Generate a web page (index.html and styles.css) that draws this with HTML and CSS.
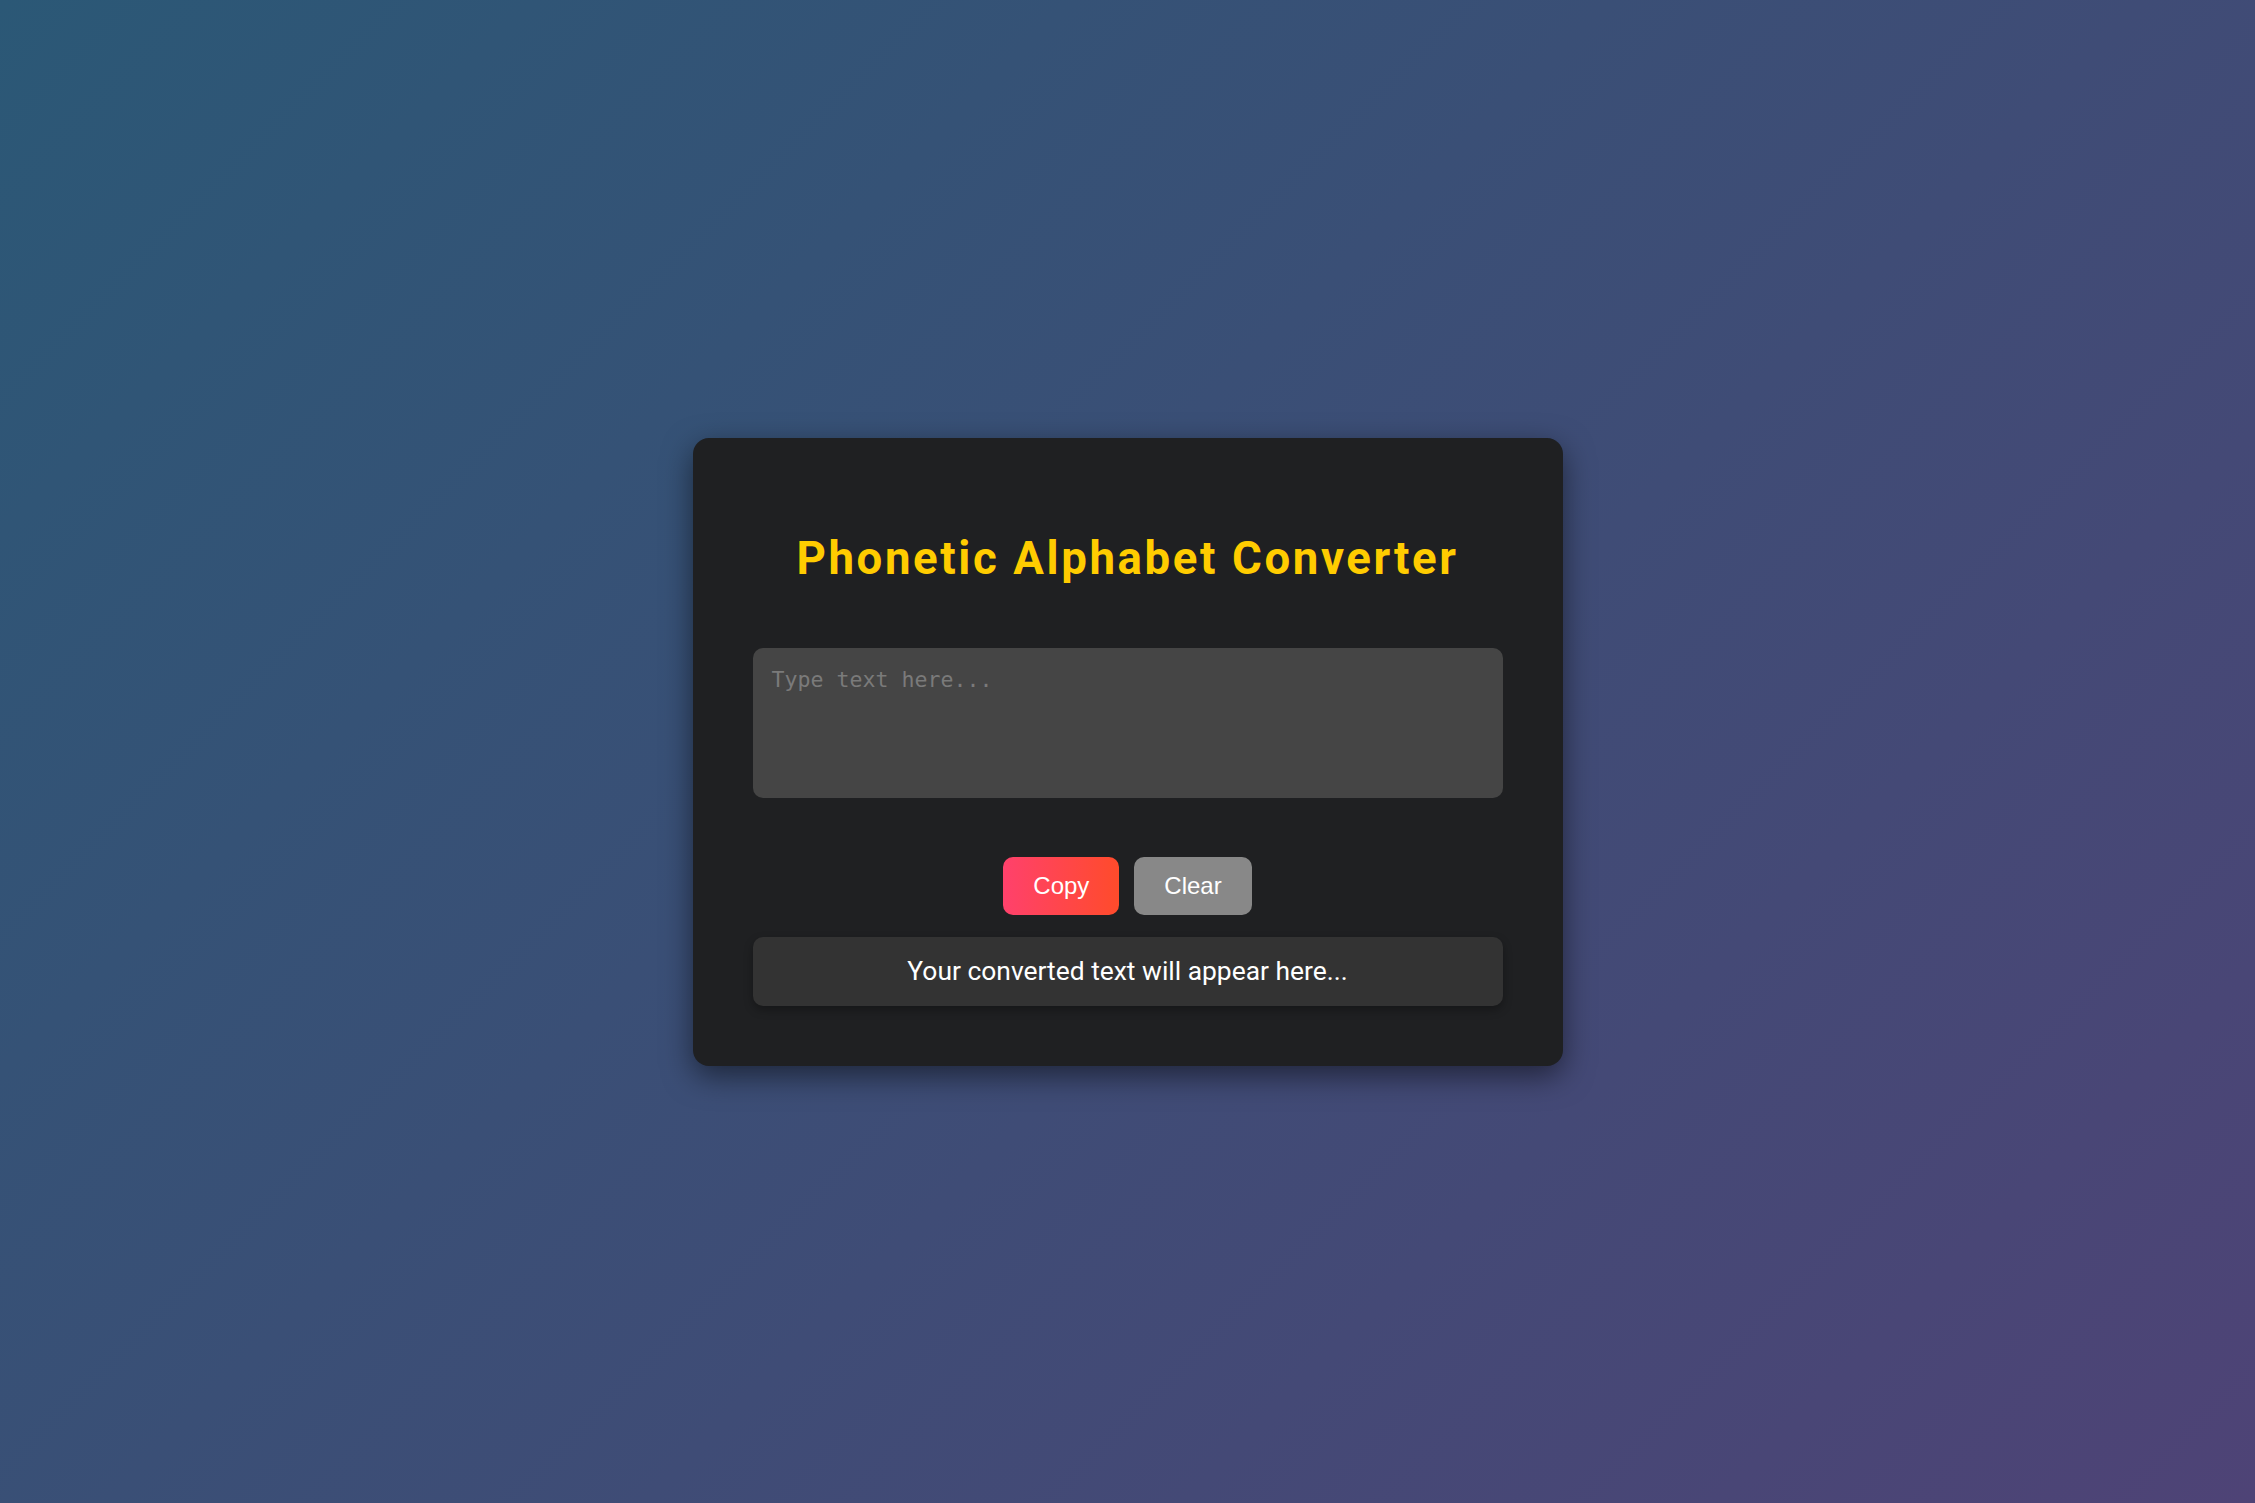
FILE: index.html
```html
<!DOCTYPE html>
<html lang="en">
<head>
<meta charset="UTF-8">
<title>Phonetic Alphabet Converter</title>
<link rel="stylesheet" href="styles.css">
</head>
<body>
  <main class="card">
    <h1 class="title">Phonetic Alphabet Converter</h1>
    <textarea class="input" placeholder="Type text here..."></textarea>
    <div class="actions">
      <button class="btn btn-copy">Copy</button>
      <button class="btn btn-clear">Clear</button>
    </div>
    <div class="output">Your converted text will appear here...</div>
  </main>
</body>
</html>
```
FILE: styles.css
```css
* { box-sizing: border-box; }
html, body { height: 100%; }
body {
  margin: 0;
  min-height: 100vh;
  display: flex;
  align-items: center;
  justify-content: center;
  background: linear-gradient(135deg, #2b5876, #4e4376);
  font-family: Roboto, "Liberation Sans", sans-serif;
  color: #fff;
}
.card {
  width: 870px;
  padding: 60px;
  background: #1f2022;
  border-radius: 16px;
  box-shadow: 0 10px 30px rgba(0, 0, 0, 0.5);
  display: flex;
  flex-direction: column;
}
.title {
  margin: 34px 0 62px;
  font-size: 45.6px;
  line-height: 54px;
  letter-spacing: 2.6px;
  font-weight: 700;
  color: #ffcc00;
  text-align: center;
}
.input {
  display: block;
  width: 100%;
  height: 150px;
  padding: 19px;
  border: none;
  border-radius: 10px;
  background: #454545;
  color: #fff;
  font-family: "DejaVu Sans Mono", monospace;
  font-size: 21.6px;
  resize: none;
  outline: none;
}
.input::placeholder { color: #7a7a7a; }
.actions {
  display: flex;
  justify-content: center;
  gap: 15px;
  margin-top: 59px;
}
.btn {
  border: none;
  border-radius: 10px;
  padding: 0 30px;
  height: 58px;
  font-family: "Liberation Sans", Arial, sans-serif;
  font-size: 24px;
  color: #fff;
  cursor: pointer;
}
.btn-copy { background: linear-gradient(90deg, #ff416c, #ff4b2b); }
.btn-clear { background: #888888; }
.output {
  margin-top: 22px;
  padding: 19px;
  background: #333333;
  border-radius: 10px;
  box-shadow: 0 4px 10px rgba(0, 0, 0, 0.3);
  text-align: center;
  font-size: 26.4px;
  line-height: 31px;
  color: #fff;
}
```
